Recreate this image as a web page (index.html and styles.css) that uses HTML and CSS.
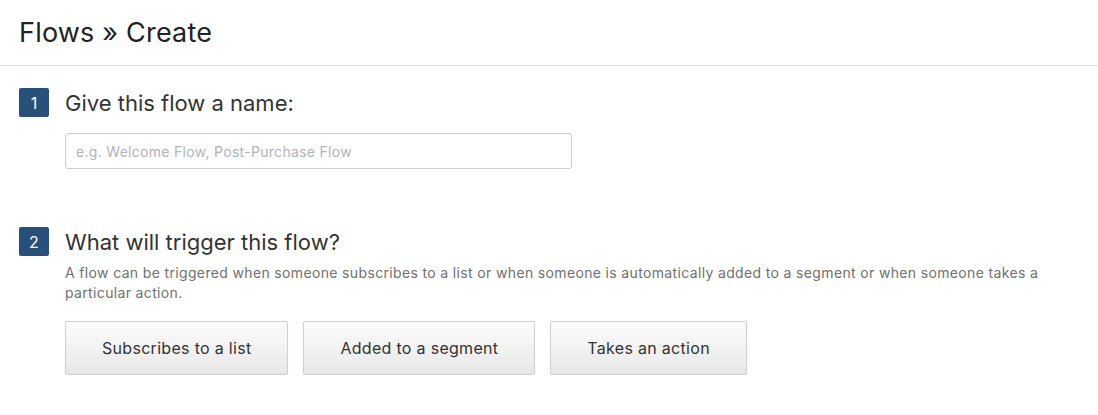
FILE: index.html
```html
<!DOCTYPE html>
<html lang="en">
<head>
    <meta charset="UTF-8">
    <title>Flows » Create</title>
    <link rel="stylesheet" href="styles.css">
</head>
<body>
    <div class="page-header">
        <h1>Flows » Create</h1>
    </div>

    <div class="content">
        <div class="step">
            <div class="step-title">
                <span class="step-num">1</span>
                <h2>Give this flow a name:</h2>
            </div>
            <div class="step-body">
                <input type="text" class="name-input" placeholder="e.g. Welcome Flow, Post-Purchase Flow">
            </div>
        </div>

        <div class="step step-trigger">
            <div class="step-title">
                <span class="step-num">2</span>
                <h2>What will trigger this flow?</h2>
            </div>
            <div class="step-body">
                <p class="help">A flow can be triggered when someone subscribes to a list or when someone is automatically added to a segment or when someone takes a particular action.</p>
                <div class="triggers">
                    <button class="btn">Subscribes to a list</button>
                    <button class="btn">Added to a segment</button>
                    <button class="btn">Takes an action</button>
                </div>
            </div>
        </div>
    </div>
</body>
</html>
```

FILE: styles.css
```css
body {
    margin: 0;
    font-family: Inter, "Open Sans", sans-serif;
    color: #333;
    background: #fff;
}

.page-header {
    height: 66px;
    border-bottom: 1px solid #ddd;
    padding: 0 19px;
    box-sizing: border-box;
}

.page-header h1 {
    margin: 0;
    padding-top: 16px;
    font-size: 27px;
    font-weight: normal;
    letter-spacing: 0.2px;
    line-height: 34px;
    color: #222;
}

.content {
    padding: 22px 18px 0 19px;
}

.step-title {
    display: flex;
    align-items: center;
    gap: 16px;
}

.step-num {
    width: 30px;
    height: 29px;
    border-radius: 2px;
    background: #27507a;
    color: #fff;
    font-size: 16px;
    display: flex;
    align-items: center;
    justify-content: center;
}

.step-title h2 {
    margin: 0;
    font-size: 22px;
    font-weight: normal;
    color: #333;
}

.step-body {
    padding-left: 46px;
}

.name-input {
    display: block;
    width: 507px;
    height: 36px;
    margin-top: 16px;
    padding: 0 10px;
    box-sizing: border-box;
    border: 1px solid #ccc;
    border-radius: 3px;
    font-family: inherit;
    font-size: 14px;
    letter-spacing: 0.3px;
}

.name-input::placeholder {
    color: #b0b4ba;
}

.step-trigger {
    margin-top: 58px;
}

.help {
    margin: 7px 0 0;
    font-size: 14px;
    letter-spacing: 0.35px;
    line-height: 20px;
    color: #707070;
}

.triggers {
    display: flex;
    gap: 15px;
    margin-top: 18px;
}

.btn {
    height: 54px;
    padding: 0 36px;
    font-family: inherit;
    font-size: 16px;
    letter-spacing: 0.3px;
    color: #333;
    background: linear-gradient(#fcfcfc, #e8e8e8);
    border: 1px solid #d0d0d0;
    border-radius: 2px;
    box-shadow: 0 1px 1px rgba(0, 0, 0, 0.12);
}
```
